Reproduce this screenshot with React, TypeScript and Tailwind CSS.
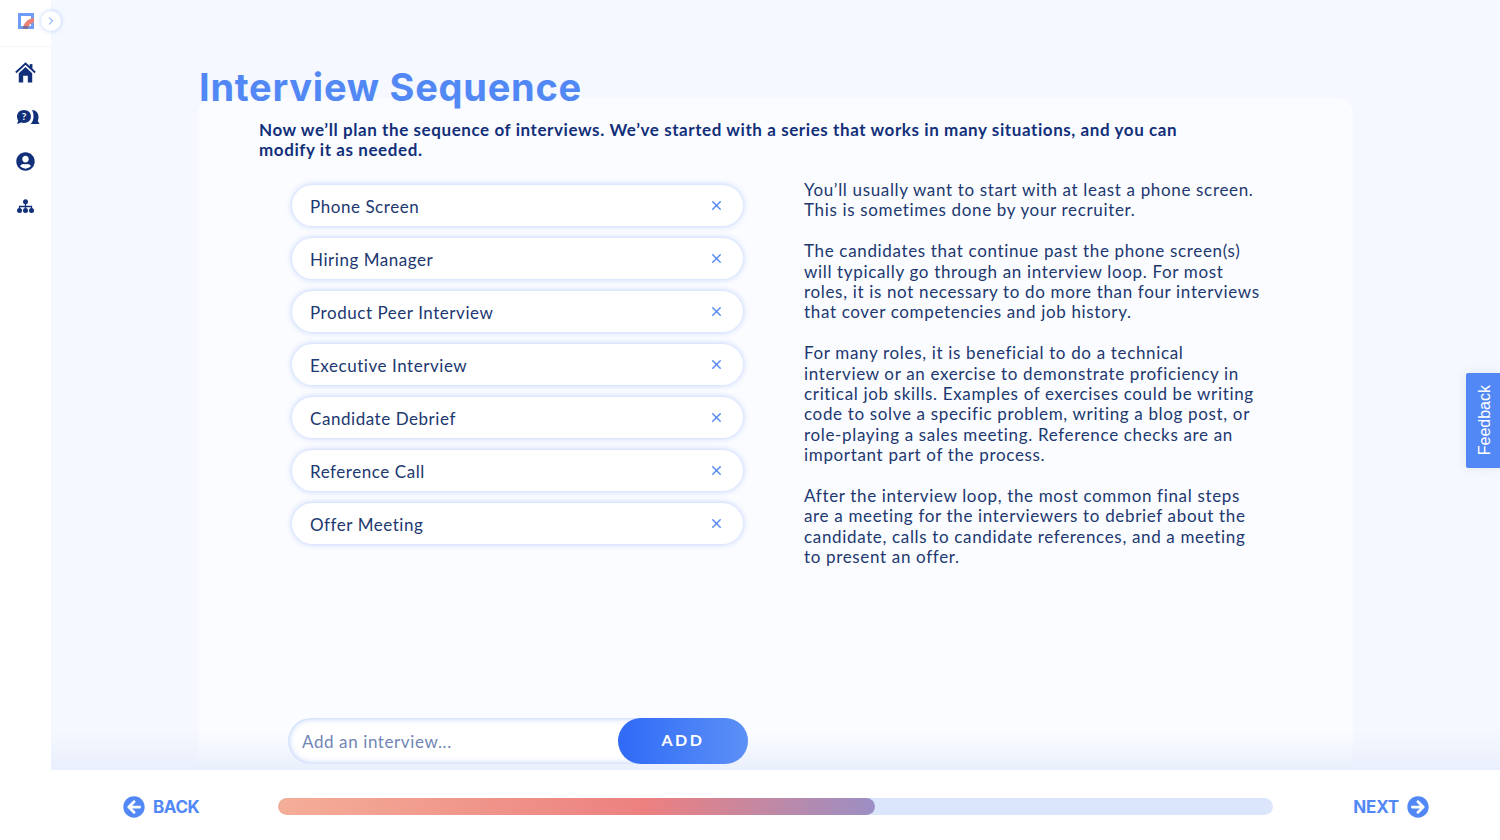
import { ChevronRight, X } from "lucide-react";
import { FaArrowCircleLeft, FaArrowCircleRight, FaUserCircle } from "react-icons/fa";

const interviews = [
  "Phone Screen",
  "Hiring Manager",
  "Product Peer Interview",
  "Executive Interview",
  "Candidate Debrief",
  "Reference Call",
  "Offer Meeting",
];

function Logo() {
  return (
    <svg width="16" height="16" viewBox="0 0 16 16">
      <rect x="0" y="0" width="16" height="16" fill="#6f9cf7" />
      <rect x="3" y="3" width="10" height="10" fill="#ffffff" />
      <path d="M5 16 C5.500 10 9 6 16 5 L16 9.500 C12.500 10 10.500 12 10 16 Z" fill="#e88272" />
      <rect x="5" y="13" width="5" height="3" fill="#7d6f95" />
    </svg>
  );
}

function HomeIcon() {
  return (
    <svg width="21" height="21" viewBox="0 0 20 20" fill="#12307a">
      <path d="M0.800 10 L10 1.500 L19.200 10" fill="none" stroke="#12307a" strokeWidth="1.800" />
      <rect x="14" y="2" width="2.600" height="4.500" />
      <path d="M3.600 10.600 L10 4.800 L16.400 10.600 V19.500 H12.200 V13 H7.800 V19.500 H3.600 Z" />
    </svg>
  );
}

function ChatIcon() {
  return (
    <svg width="24" height="16" viewBox="0 0 24 16">
      <path d="M8 1 C12 1 15 3.800 15 7.500 C15 11.200 12 14 8 14 C7 14 6 13.800 5.200 13.500 L1 15 L2.300 11.500 C1.500 10.500 1 9 1 7.500 C1 3.800 4 1 8 1 Z" fill="#12307a" />
      <path d="M16 1 C20 1 22.500 4 22.500 8 C22.500 9.500 22.300 10.800 21.800 12 L23.500 15 L14.500 15 C16.500 13.500 17.500 10.500 17.500 7.500 C17.500 5 17 2.800 16 1 Z" fill="#12307a" />
      <text x="8" y="11.200" textAnchor="middle" fontSize="10" fontWeight="700" fill="#ffffff" fontFamily="Lato">?</text>
    </svg>
  );
}

function OrgIcon() {
  return (
    <svg width="17" height="15" viewBox="0 0 17 15" fill="#12307a">
      <circle cx="8.500" cy="2.800" r="2.500" />
      <circle cx="2.500" cy="11.500" r="2.500" />
      <circle cx="8.500" cy="11.500" r="2.500" />
      <circle cx="14.500" cy="11.500" r="2.500" />
      <path d="M8.500 3 V11 M2.500 11 V7.500 H14.500 V11" fill="none" stroke="#12307a" strokeWidth="1.300" />
    </svg>
  );
}

function Sidebar() {
  return (
    <aside className="w-[51px] shrink-0 bg-white flex flex-col relative z-20">
      <div className="h-[47px] shrink-0 border-b border-[#f1f4fb] flex items-center pl-[18px] pb-[4px]">
        <Logo />
        <div className="absolute left-[41px] top-[11px] w-[20px] h-[20px] rounded-full bg-white shadow-[0_0_5px_rgba(82,136,245,0.4)] flex items-center justify-center">
          <ChevronRight size={12} color="#4f85f5" strokeWidth={2} />
        </div>
      </div>
      <nav className="flex flex-col items-center text-[#12307a] pt-[14px]">
        <div className="h-[22px] flex items-center"><HomeIcon /></div>
        <div className="h-[22px] mt-[23px] flex items-center pl-[4px]"><ChatIcon /></div>
        <div className="h-[20px] mt-[23px] flex items-center"><FaUserCircle size={19} /></div>
        <div className="h-[20px] mt-[25px] flex items-center"><OrgIcon /></div>
      </nav>
    </aside>
  );
}

function InterviewPill({ name }: { name: string }) {
  return (
    <div className="h-[41px] shrink-0 rounded-full bg-white shadow-[0_0_6px_rgba(82,136,245,0.4)] flex items-center justify-between pl-[18px] pr-[19px]">
      <span className="text-[17px] tracking-[0.55px] text-[#20386f] pt-[3px]">{name}</span>
      <X size={15} color="#5288f5" strokeWidth={2.25} />
    </div>
  );
}

export default function App() {
  return (
    <div className="w-[1500px] h-[840px] flex overflow-hidden bg-white font-['Lato','Noto_Sans',sans-serif]">
      <Sidebar />
      <div className="flex-1 flex flex-col min-w-0">
        <main className="h-[770px] bg-[#f5f8fe] pl-[147px] pr-[147px] relative overflow-hidden flex flex-col">
          <h1 className="relative z-10 h-[98px] pt-[63px] shrink-0 pl-[1px] font-['Inter',sans-serif] font-bold text-[38px] leading-[48px] tracking-[0.75px] text-[#5288f5] whitespace-nowrap">
            Interview Sequence
          </h1>
          <section className="flex-1 bg-[#fbfcff] rounded-t-[16px] pl-[61px] pr-[90px] flex flex-col min-h-0">
            <p className="h-[87px] pt-[22px] text-[17px] leading-[20.4px] font-bold tracking-[0.58px] text-[#12307a] w-[950px]">
              Now we’ll plan the sequence of interviews. We’ve started with a series that works in many situations, and you can modify it as needed.
            </p>
            <div className="flex flex-1 min-h-0">
              <div className="w-[545px] shrink-0 pl-[33px] pr-[61px] flex flex-col gap-[12px]">
                {interviews.map((name) => (
                  <InterviewPill key={name} name={name} />
                ))}
              </div>
              <div className="flex flex-col gap-[20.4px] mt-[-5px] text-[17px] leading-[20.4px] tracking-[0.66px] text-[#20386f] whitespace-nowrap">
                <p>You’ll usually want to start with at least a phone screen.<br />This is sometimes done by your recruiter.</p>
                <p>The candidates that continue past the phone screen(s)<br />will typically go through an interview loop. For most<br />roles, it is not necessary to do more than four interviews<br />that cover competencies and job history.</p>
                <p>For many roles, it is beneficial to do a technical<br />interview or an exercise to demonstrate proficiency in<br />critical job skills. Examples of exercises could be writing<br />code to solve a specific problem, writing a blog post, or<br />role-playing a sales meeting. Reference checks are an<br />important part of the process.</p>
                <p>After the interview loop, the most common final steps<br />are a meeting for the interviewers to debrief about the<br />candidate, calls to candidate references, and a meeting<br />to present an offer.</p>
              </div>
            </div>
            <div className="relative z-10 w-[460px] h-[46px] ml-[29px] mb-[6px] rounded-full bg-white shadow-[inset_0_0_6px_rgba(82,136,245,0.5)] flex items-center justify-between pl-[14px]">
              <span className="text-[17px] tracking-[0.6px] text-[#7186b4] pt-[1px]">Add an interview...</span>
              <button className="w-[130px] h-[46px] rounded-full bg-gradient-to-r from-[#2f69f6] to-[#5c90f6] text-white text-[16px] font-bold tracking-[2.6px] pb-[2px]">
                ADD
              </button>
            </div>
          </section>
          <div className="absolute left-0 right-0 bottom-0 h-[40px] bg-gradient-to-b from-[#e9effc]/0 to-[#e9effc]" />
        </main>
        <footer className="h-[70px] bg-white flex items-center pl-[72px] pr-[71px] pt-[3px]">
          <div className="w-[155px] shrink-0 flex items-center gap-[8px] text-[#5288f5]">
            <FaArrowCircleLeft size={22} />
            <span className="mt-[3px] font-['Inter',sans-serif] font-bold text-[17px] tracking-[-0.4px]">BACK</span>
          </div>
          <div className="w-[995px] h-[17px] rounded-full bg-[#dbe5fb] overflow-hidden">
            <div className="w-[597px] h-full rounded-full bg-[linear-gradient(90deg,#f4ae97_0%,#ec8080_62%,#9b8fc4_100%)]" />
          </div>
          <div className="flex-1 flex items-center justify-end gap-[8px] text-[#5288f5]">
            <span className="mt-[3px] font-['Inter',sans-serif] font-bold text-[17px] tracking-[-0.2px]">NEXT</span>
            <FaArrowCircleRight size={22} />
          </div>
        </footer>
      </div>
      <div className="absolute right-0 top-[373px] w-[34px] h-[95px] bg-[#5288f5] rounded-l-[2px] shadow-[0_0_12px_rgba(0,0,0,0.08)] flex items-center justify-center pl-[3px]">
        <span className="[writing-mode:vertical-rl] rotate-180 font-['Liberation_Sans',sans-serif] text-[16px] font-normal text-white">Feedback</span>
      </div>
    </div>
  );
}
